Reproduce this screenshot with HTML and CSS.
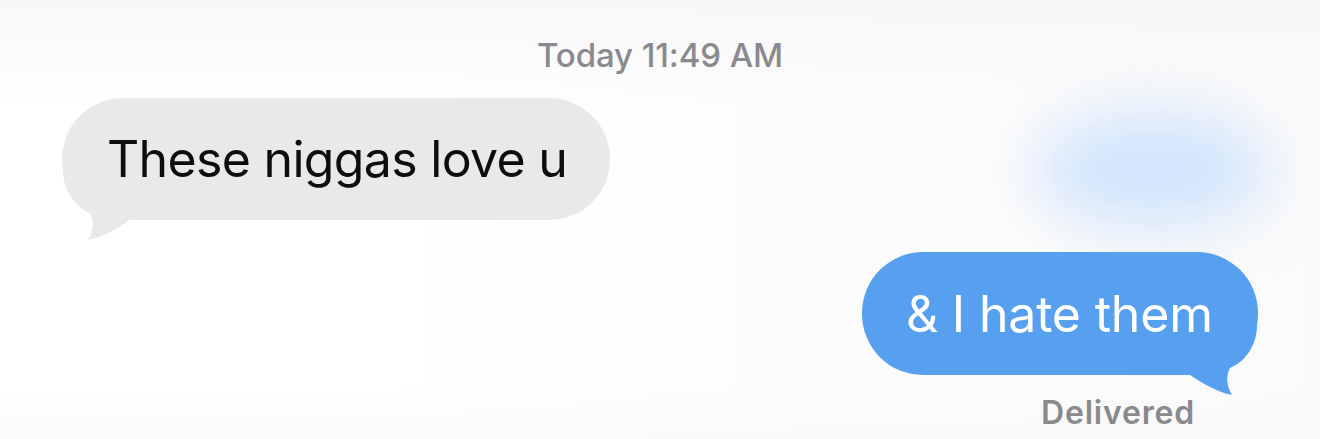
FILE: index.html
```html
<!DOCTYPE html>
<html>
<head>
<meta charset="utf-8">
<link rel="stylesheet" href="styles.css">
</head>
<body>
<div class="screen">
  <div class="blur-blob"></div>
  <div class="stamp">Today 11:49 AM</div>
  <div class="row row-in">
    <div class="bubble bubble-in">
      <span class="msg">These niggas love u</span>
      <svg class="tail tail-in" width="100" height="72" viewBox="0 0 100 72"><path d="M1 0 C 1 20, 12 36, 28 43 C 32 50, 32 60, 26 70 C 40 67, 55 59, 68 50 L 100 50 L 100 0 Z" fill="#e9e9eb"/></svg>
    </div>
  </div>
  <div class="row row-out">
    <div class="bubble bubble-out">
      <span class="msg">&amp; I hate them</span>
      <svg class="tail tail-out" width="100" height="72" viewBox="0 0 100 72"><path d="M1 0 C 1 20, 12 36, 28 43 C 32 50, 32 60, 26 70 C 40 67, 55 59, 68 50 L 100 50 L 100 0 Z" fill="#56a0ef"/></svg>
    </div>
  </div>
  <div class="status">Delivered</div>
</div>
</body>
</html>
```
FILE: styles.css
```css
html, body {
  margin: 0;
  padding: 0;
}
body {
  width: 1320px;
  height: 439px;
  overflow: hidden;
  background: #ffffff;
  font-family: Inter, "Liberation Sans", sans-serif;
}
.screen {
  position: relative;
  width: 1320px;
  height: 439px;
  display: flex;
  flex-direction: column;
  background:
    linear-gradient(180deg, rgba(246,246,247,0.85) 0%, rgba(255,255,255,0) 24%, rgba(255,255,255,0) 88%, rgba(249,249,249,0.8) 100%),
    linear-gradient(90deg, #ffffff 0%, #ffffff 30%, #fcfcfc 60%, #fafafa 100%);
}
.blur-blob {
  position: absolute;
  left: 1035px;
  top: 110px;
  width: 235px;
  height: 120px;
  border-radius: 50%;
  background: #d2e5fb;
  filter: blur(30px);
}
.stamp {
  margin-top: 35px;
  text-align: center;
  font-size: 33px;
  font-weight: 500;
  color: #8a8a8e;
  line-height: 40px;
  letter-spacing: -0.1px;
}
.row {
  display: flex;
}
.row-in {
  margin-top: 23px;
  padding-left: 62px;
}
.row-out {
  margin-top: 32px;
  justify-content: flex-end;
  padding-right: 62px;
}
.bubble {
  position: relative;
  height: 122px;
  display: flex;
  align-items: center;
  border-radius: 61px;
  font-size: 50px;
  line-height: 1;
  letter-spacing: -0.4px;
  box-sizing: border-box;
}
.msg {
  position: relative;
  z-index: 1;
  white-space: nowrap;
}
.bubble-in {
  background: #e9e9eb;
  color: #0d0d0d;
  padding: 0 0 0 45px;
  width: 548px;
  letter-spacing: -0.68px;
}
.bubble-out {
  background: #56a0ef;
  color: #ffffff;
  padding: 0 0 0 44px;
  width: 396px;
  height: 123px;
  letter-spacing: -0.2px;
}
.tail {
  position: absolute;
  bottom: -22px;
}
.tail-in {
  left: 0;
}
.tail-out {
  right: 0;
  transform: scaleX(-1);
}
.status {
  align-self: flex-end;
  margin-right: 125px;
  margin-top: 18px;
  font-size: 32px;
  font-weight: 600;
  color: #8a8a8e;
  letter-spacing: 0.8px;
}
```
